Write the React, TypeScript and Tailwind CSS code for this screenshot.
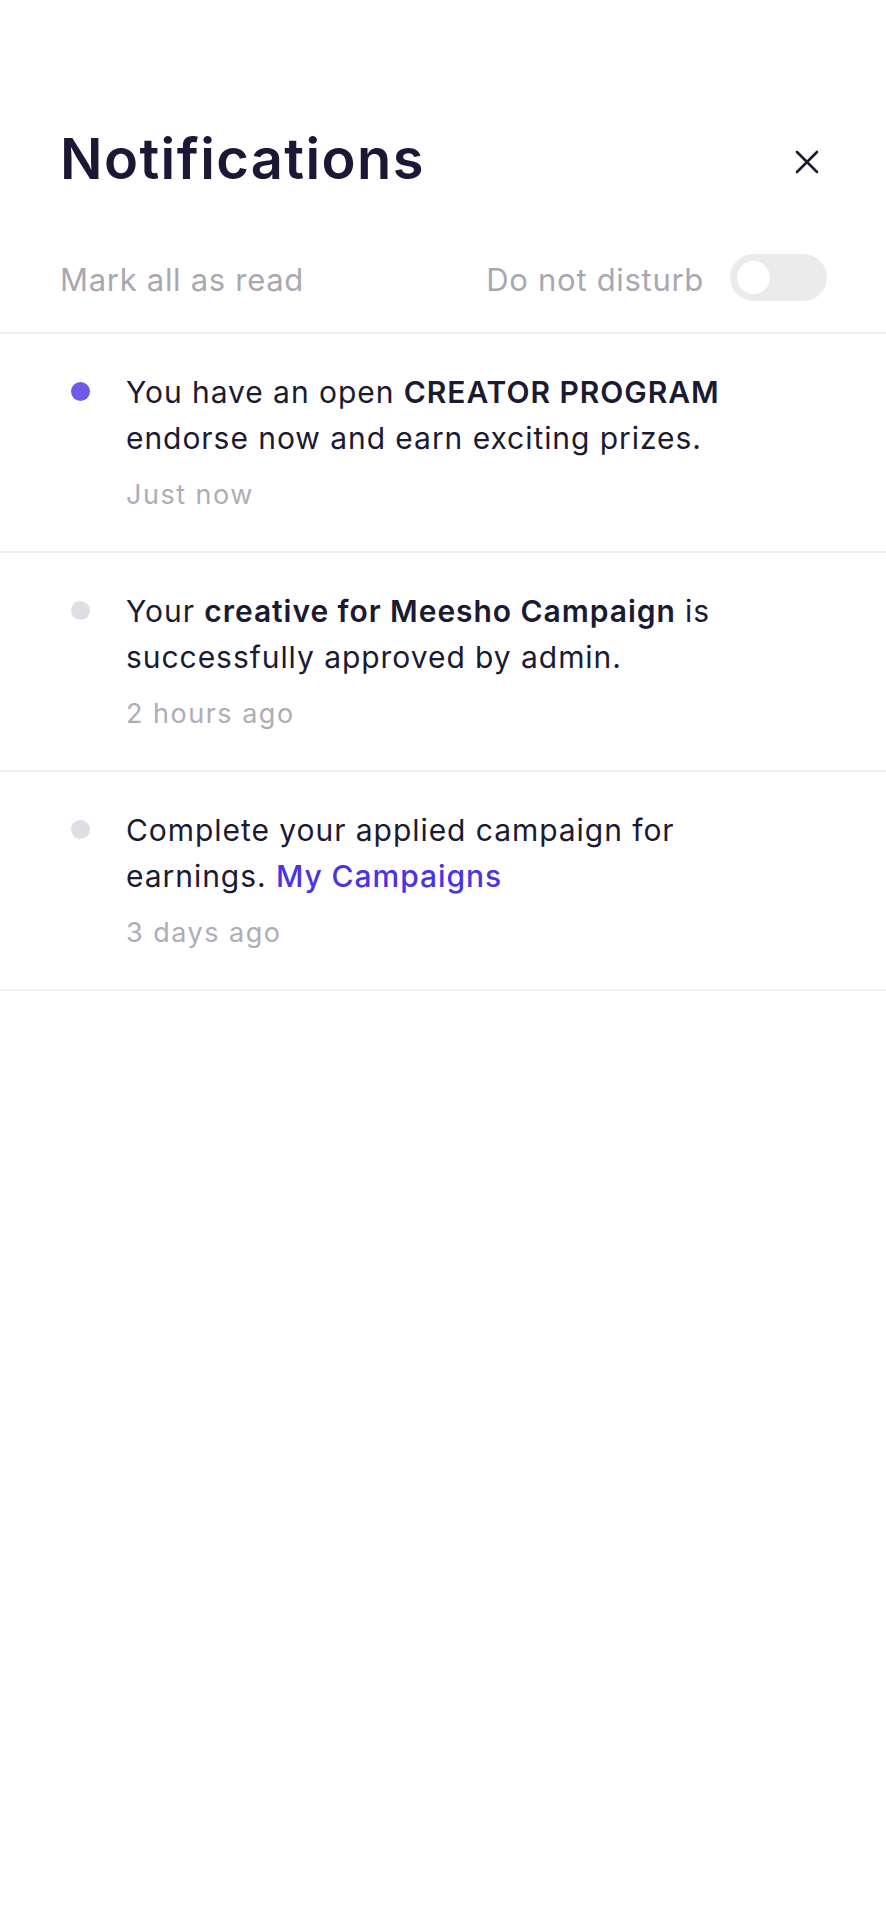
import React, { useState } from "react";

interface INotification {
  id: number;
  unread: boolean;
  time: string;
  body: React.ReactNode;
}

const notifications: INotification[] = [
  {
    id: 1,
    unread: true,
    time: "Just now",
    body: (
      <>
        You have an open <span className="font-semibold">CREATOR PROGRAM</span>
        <br />
        endorse now and earn exciting prizes.
      </>
    ),
  },
  {
    id: 2,
    unread: false,
    time: "2 hours ago",
    body: (
      <>
        Your <span className="font-semibold">creative for Meesho Campaign</span> is
        <br />
        successfully approved by admin.
      </>
    ),
  },
  {
    id: 3,
    unread: false,
    time: "3 days ago",
    body: (
      <>
        Complete your applied campaign for
        <br />
        earnings. <a className="font-medium text-[#4b32e6]">My Campaigns</a>
      </>
    ),
  },
];

const App: React.FC = () => {
  const [dnd, setDnd] = useState<boolean>(false);

  return (
    <div className="min-h-screen w-full bg-white font-['Inter',sans-serif] text-[#1c1a33]">
      {/* header */}
      <div className="flex items-center justify-between pl-[60px] pr-[67px] pt-[131px]">
        <h1 className="text-[56px] font-semibold leading-none tracking-[1.4px] text-[#1b1734]">
          Notifications
        </h1>
        <button className="mt-[6px] flex h-[24px] w-[24px] items-center justify-center">
          <svg width="24" height="24" viewBox="0 0 24 24" fill="none">
            <path
              d="M2 2L22 22M22 2L2 22"
              stroke="#1b1734"
              strokeWidth="2.6"
              strokeLinecap="round"
            />
          </svg>
        </button>
      </div>

      <div className="mt-[67px] flex items-start justify-between border-b-2 border-[#efefef] pb-[29px] pl-[60px] pr-[59px]">
        <span className="mt-[2px] text-[31px] leading-[47px] tracking-[0.7px] text-[#a9a8b1]">
          Mark all as read
        </span>
        <div className="flex items-start gap-[26px]">
          <span className="mt-[2px] text-[31px] leading-[47px] tracking-[0.7px] text-[#a9a8b1]">
            Do not disturb
          </span>
          <button
            onClick={() => setDnd(!dnd)}
            className="flex h-[47px] w-[97px] items-center rounded-full bg-[#ebebeb] px-[7px]"
          >
            <span className="h-[33px] w-[33px] rounded-full bg-white" />
          </button>
        </div>
      </div>

      {notifications.map((n) => (
        <div
          key={n.id}
          className="flex border-b-2 border-[#efefef] pb-[38px] pl-[71px] pr-[40px] pt-[35px]"
        >
          <div className="flex h-[46px] w-[19px] shrink-0 items-center pb-[1px]">
            <span
              className={
                n.unread
                  ? "h-[19px] w-[19px] rounded-full bg-[#6e5ae6]"
                  : "h-[19px] w-[19px] rounded-full bg-[#dfdee5]"
              }
            />
          </div>
          <div className="ml-[36px] flex flex-col">
            <p className="text-[30px] leading-[46px] tracking-[0.95px]">{n.body}</p>
            <span className="mt-[16px] text-[27px] leading-[36px] tracking-[1.5px] text-[#aeadb5]">
              {n.time}
            </span>
          </div>
        </div>
      ))}
    </div>
  );
};

export default App;
